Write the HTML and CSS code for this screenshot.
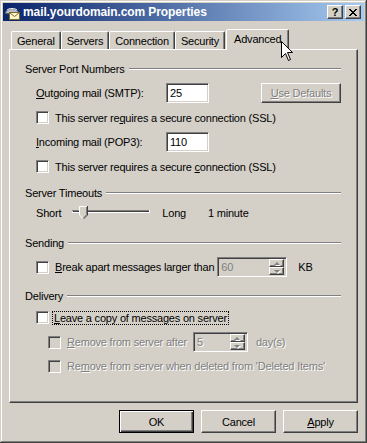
FILE: index.html
```html
<!DOCTYPE html>
<html lang="en">
<head>
    <meta charset="UTF-8">
    <title>mail.yourdomain.com Properties</title>
    <link rel="stylesheet" href="styles.css">
</head>
<body>

<div class="window">

    <!-- Title bar -->
    <div class="titlebar">
        <svg class="app-icon" width="16" height="16" viewBox="0 0 16 16">
            <path d="M1.5 9.5 C1.5 3 14.5 3 14.5 9.5 Z" fill="#b8bcc8" stroke="#5a6070"/>
            <path d="M3 6 C5 4 11 4 13 6" fill="none" stroke="#e8ecf4"/>
            <rect x="5.5" y="8.5" width="10" height="7" fill="#fff7c8" stroke="#7a6a30"/>
            <path d="M5.5 8.5 L10.5 12.5 L15.5 8.5" fill="none" stroke="#7a6a30"/>
        </svg>
        <span class="title">mail.yourdomain.com Properties</span>
        <span class="caption-btn">?</span>
        <span class="caption-btn">
            <svg width="8" height="7" viewBox="0 0 8 7">
                <path d="M0 0 L7 7 M1 0 L8 7 M7 0 L0 7 M8 0 L1 7" stroke="#000" stroke-width="1"/>
            </svg>
        </span>
    </div>

    <!-- Tabs -->
    <div class="tabs">
        <div class="tab">General</div>
        <div class="tab">Servers</div>
        <div class="tab">Connection</div>
        <div class="tab">Security</div>
        <div class="tab active">Advanced</div>
    </div>

    <div class="panel">

        <div class="group">
            <div class="group-title">Server Port Numbers</div>
            <div class="row indent">
                <span class="port-label"><u>O</u>utgoing mail (SMTP):</span>
                <span class="edit">25</span>
                <span class="btn defaults disabled"><u>U</u>se Defaults</span>
            </div>
            <div class="row check-row indent">
                <span class="check"></span>
                <span>This server re<u>q</u>uires a secure connection (SSL)</span>
            </div>
            <div class="row indent">
                <span class="port-label"><u>I</u>ncoming mail (POP3):</span>
                <span class="edit">110</span>
            </div>
            <div class="row check-row indent">
                <span class="check"></span>
                <span>This server requires a secure <u>c</u>onnection (SSL)</span>
            </div>
        </div>

        <div class="group timeouts">
            <div class="group-title">Server Timeouts</div>
            <div class="row slider-row indent">
                <span>Short</span>
                <svg class="slider" width="78" height="14" viewBox="0 0 78 14">
                    <path d="M0 4.5 H78" stroke="#808080"/>
                    <path d="M1 5.5 H77" stroke="#404040"/>
                    <path d="M0 6.5 H78 M77.5 4 V7" stroke="#fff"/>
                    <path d="M7 0 H16 V9 L11.5 13.5 L7 9 Z" fill="#d4d0c8"/>
                    <path d="M7.5 9 V0.5 H15.5" fill="none" stroke="#fff"/>
                    <path d="M15.5 0 V9 L11.5 13" fill="none" stroke="#404040"/>
                    <path d="M14.5 1 V8.6 L11.5 11.6" fill="none" stroke="#808080"/>
                    <path d="M7.5 9 L11 12.5" fill="none" stroke="#fff"/>
                </svg>
                <span class="long">Long</span>
                <span class="timeout-value">1 minute</span>
            </div>
        </div>

        <div class="group">
            <div class="group-title">Sending</div>
            <div class="row indent">
                <span class="check"></span>
                <span><u>B</u>reak apart messages larger than</span>
                <span class="spin break-spin">
                    <span class="spin-value">60</span>
                    <span class="spin-btns">
                        <span class="spin-btn"><i class="arrow up"></i></span>
                        <span class="spin-btn"><i class="arrow down"></i></span>
                    </span>
                </span>
                <span class="unit">KB</span>
            </div>
        </div>

        <div class="group">
            <div class="group-title">Delivery</div>
            <div class="row check-row indent">
                <span class="check"></span>
                <span class="focused"><u>L</u>eave a copy of messages on server</span>
            </div>
            <div class="row sub disabled">
                <span class="check off"></span>
                <span><u>R</u>emove from server after</span>
                <span class="spin days-spin">
                    <span class="spin-value">5</span>
                    <span class="spin-btns">
                        <span class="spin-btn"><i class="arrow up"></i></span>
                        <span class="spin-btn"><i class="arrow down"></i></span>
                    </span>
                </span>
                <span class="days">day(s)</span>
            </div>
            <div class="row check-row sub disabled">
                <span class="check off"></span>
                <span>Re<u>m</u>ove from server when deleted from 'Deleted Items'</span>
            </div>
        </div>

    </div>

    <!-- Dialog buttons -->
    <div class="actions">
        <span class="btn default">OK</span>
        <span class="btn">Cancel</span>
        <span class="btn"><u>A</u>pply</span>
    </div>

    <!-- Mouse pointer over the tab -->
    <svg class="cursor" width="13" height="21" viewBox="0 0 13 21">
        <path d="M0.5 0.5 V16.5 L4.5 12.5 L7.5 19.5 L9.5 18.5 L6.5 11.5 H11.5 Z" fill="#fff" stroke="#000"/>
    </svg>
</div>

</body>
</html>
```

FILE: styles.css
```css
body {
    margin: 0;
    font-family: "Liberation Sans", Arial, sans-serif;
    font-size: 11px;
    letter-spacing: -0.2px;
    color: #000;
    background: #d4d0c8;
}

/* Window frame */
.window {
    position: relative;
    width: 367px;
    height: 443px;
    box-sizing: border-box;
    padding: 3px;
    display: flex;
    flex-direction: column;
    background: #d4d0c8;
    box-shadow: inset -1px -1px #404040, inset 1px 1px #d4d0c8,
                inset -2px -2px #808080, inset 2px 2px #fff;
}

.titlebar {
    height: 18px;
    display: flex;
    align-items: center;
    padding: 0 3px 0 1px;
    background: linear-gradient(to right, #0a246a, #a6caf0);
}

.app-icon {
    margin-right: 3px;
}

.title {
    flex: 1;
    color: #fff;
    font-weight: bold;
    font-size: 12px;
    letter-spacing: -0.1px;
}

.caption-btn {
    width: 16px;
    height: 14px;
    box-sizing: border-box;
    margin-left: 2px;
    display: flex;
    align-items: center;
    justify-content: center;
    background: #d4d0c8;
    border: 1px solid;
    border-color: #fff #404040 #404040 #fff;
    box-shadow: inset -1px -1px #808080;
    font-weight: bold;
    font-size: 11px;
    letter-spacing: 0;
}

/* Tabs */
.tabs {
    height: 20px;
    margin: 8px 6px 0;
    padding-left: 2px;
    display: flex;
    align-items: flex-end;
}

.tab {
    height: 18px;
    box-sizing: border-box;
    padding: 0 5px;
    display: flex;
    align-items: center;
    border: 1px solid;
    border-bottom: none;
    border-color: #fff #404040 transparent #fff;
    border-radius: 2px 2px 0 0;
    box-shadow: inset -1px 0 #808080;
}

.tab.active {
    position: relative;
    z-index: 1;
    height: 21px;
    margin-left: 1px;
    margin-bottom: -1px;
    padding: 0 7px 2px;
    background: #d4d0c8;
}

.panel {
    flex: 1;
    margin: 0 6px;
    padding: 11px 16px 0 15px;
    border: 1px solid;
    border-color: #fff #404040 #404040 #fff;
    box-shadow: inset -1px -1px #808080;
}

/* Groups */
.group {
    display: flex;
    flex-direction: column;
    gap: 5px;
}

.group + .group {
    margin-top: 10px;
}

.timeouts {
    padding-bottom: 5px;
}

.group-title {
    height: 16px;
    display: flex;
    align-items: center;
}

.group-title::after {
    content: "";
    flex: 1;
    margin-left: 4px;
    border-top: 1px solid #808080;
    border-bottom: 1px solid #fff;
}

.row {
    height: 22px;
    display: flex;
    align-items: center;
}

.check-row {
    height: 17px;
}

.indent {
    padding-left: 11px;
}

.sub {
    padding-left: 23px;
    height: 22px;
}

.sub.check-row {
    height: 16px;
}

.port-label {
    width: 130px;
}

/* Controls */
.edit,
.spin,
.check {
    box-sizing: border-box;
    border: 1px solid;
    border-color: #808080 #fff #fff #808080;
    box-shadow: inset 1px 1px #404040, inset -1px -1px #d4d0c8;
}

.edit {
    width: 43px;
    height: 20px;
    padding-left: 3px;
    display: flex;
    align-items: center;
    background: #fff;
}

.check {
    width: 13px;
    height: 13px;
    margin-right: 6px;
    background: #fff;
}

.check.off {
    background: #d4d0c8;
}

.spin {
    height: 20px;
    padding: 2px 2px 2px 3px;
    display: flex;
    align-items: center;
    color: #808080;
    background: #d4d0c8;
}

.break-spin {
    width: 70px;
    margin-left: 3px;
}

.days-spin {
    width: 55px;
    margin-left: 6px;
}

.spin-value {
    flex: 1;
}

.spin-btns {
    width: 15px;
    height: 16px;
    display: flex;
    flex-direction: column;
}

.spin-btn {
    flex: 1;
    box-sizing: border-box;
    display: flex;
    align-items: center;
    justify-content: center;
    border: 1px solid;
    border-color: #fff #404040 #404040 #fff;
    box-shadow: inset -1px -1px #808080;
}

.arrow {
    width: 0;
    height: 0;
    border-left: 3px solid transparent;
    border-right: 3px solid transparent;
    filter: drop-shadow(1px 1px 0 #fff);
}

.arrow.up {
    border-bottom: 3px solid #808080;
}

.arrow.down {
    border-top: 3px solid #808080;
}

.unit {
    margin-left: 11px;
}

.days {
    margin-left: 8px;
}

.slider-row {
    height: 14px;
}

.slider {
    margin-left: 11px;
}

.long {
    margin-left: 12px;
}

.timeout-value {
    margin-left: 22px;
}

.focused {
    outline: 1px dotted #000;
    padding: 0 1px;
    margin-left: -2px;
}

.disabled {
    color: #808080;
    text-shadow: 1px 1px #fff;
}

/* Buttons */
.btn {
    width: 75px;
    height: 23px;
    box-sizing: border-box;
    display: flex;
    align-items: center;
    justify-content: center;
    background: #d4d0c8;
    border: 1px solid;
    border-color: #fff #404040 #404040 #fff;
    box-shadow: inset -1px -1px #808080;
}

.btn.default {
    border-color: #000;
    box-shadow: inset 1px 1px #fff, inset -1px -1px #404040, inset -2px -2px #808080;
}

.defaults {
    width: 80px;
    height: 20px;
    margin-left: auto;
}

.actions {
    margin: 7px 6px 7px 0;
    display: flex;
    justify-content: flex-end;
    gap: 7px;
}

.cursor {
    position: absolute;
    left: 281px;
    top: 41px;
    z-index: 2;
}
```
